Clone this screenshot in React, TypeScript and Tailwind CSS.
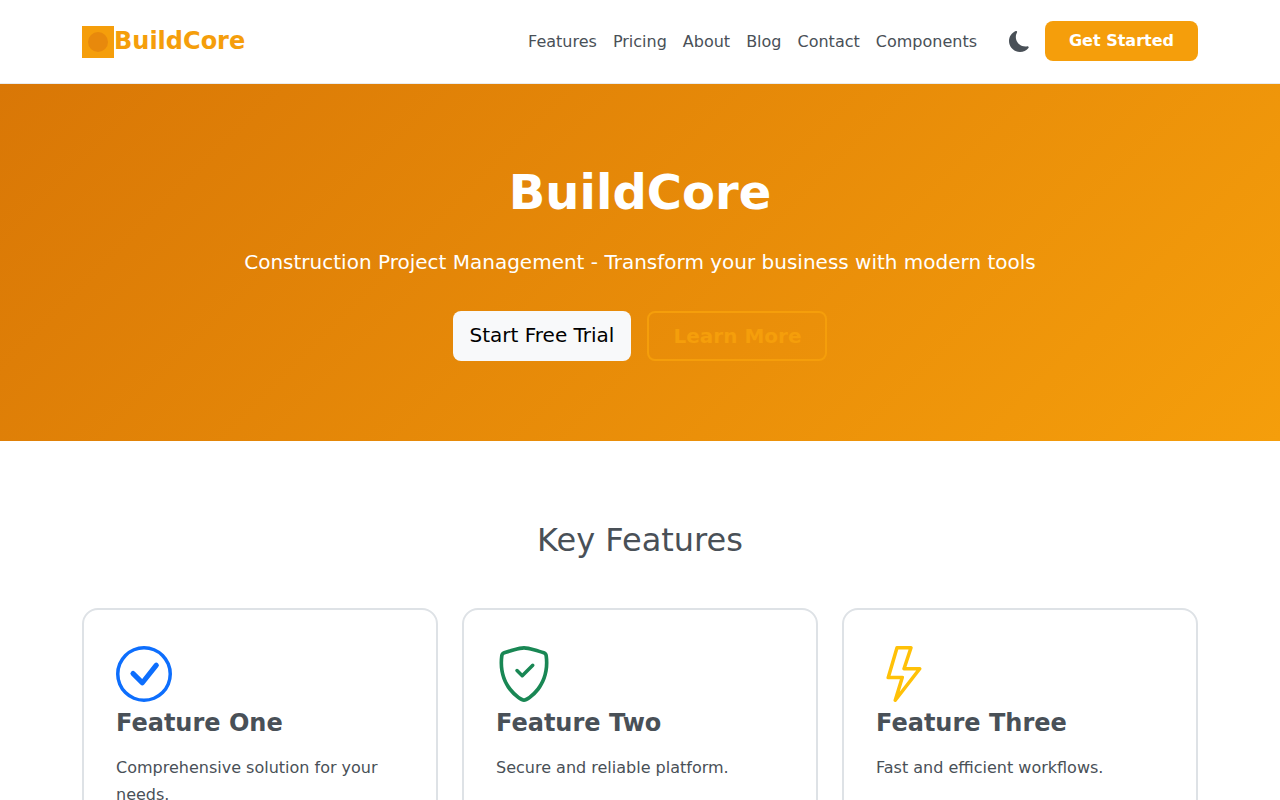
import { BsCheckCircle, BsLightning, BsMoonFill, BsShieldCheck } from "react-icons/bs";

const links = ["Features", "Pricing", "About", "Blog", "Contact", "Components"];

const features = [
  { title: "Feature One", text: "Comprehensive solution for your needs.", icon: <BsCheckCircle size={56} color="#0d6efd" /> },
  { title: "Feature Two", text: "Secure and reliable platform.", icon: <BsShieldCheck size={56} color="#198754" /> },
  { title: "Feature Three", text: "Fast and efficient workflows.", icon: <BsLightning size={56} color="#ffc107" /> },
];

export default function App() {
  return (
    <div className="bg-white text-[#495057] font-['DejaVu_Sans',sans-serif]">
      <nav className="h-[84px] border-b border-[#e9ecef] bg-white">
        <div className="w-[1116px] h-[82px] mx-auto flex items-center justify-between">
          <a className="flex items-center text-2xl font-bold text-[#f59e0b] leading-8">
            <span className="w-8 h-8 mt-[2px] bg-[#f59e0b] flex items-center justify-center">
              <span className="w-5 h-5 rounded-full bg-[#e8890c]" />
            </span>
            BuildCore
          </a>
          <div className="flex items-center">
            <ul className="flex items-center gap-4 text-base mt-[1px]">
              {links.map((l) => (
                <li key={l}>{l}</li>
              ))}
            </ul>
            <BsMoonFill size={21} color="#495057" className="ml-[32px] mt-[1px]" />
            <button className="ml-[15px] w-[153px] h-10 rounded-lg bg-[#f59e0b] text-white font-bold text-base">Get Started</button>
          </div>
        </div>
      </nav>

      <section className="h-[357px] bg-linear-[135deg] from-[#d97706] to-[#f59e0b] flex flex-col items-center pt-[79px] text-white">
        <h1 className="text-5xl font-bold leading-[58px]">BuildCore</h1>
        <p className="mt-[26px] text-xl leading-[30px]">Construction Project Management - Transform your business with modern tools</p>
        <div className="mt-[34px] flex gap-4">
          <button className="w-[178px] h-[50px] pb-[2px] rounded-lg bg-[#f8f9fa] text-black text-xl">Start Free Trial</button>
          <button className="w-[180px] h-[50px] pl-[1px] rounded-lg border-2 border-[#f59e0b] text-[#f59e0b] text-xl font-bold">Learn More</button>
        </div>
      </section>

      <section className="pt-[80px] pb-20">
        <h2 className="text-center text-[32px] leading-[38px]">Key Features</h2>
        <div className="w-[1116px] mx-auto mt-[49px] grid grid-cols-3 gap-6">
          {features.map((f) => (
            <div key={f.title} className="border-2 border-[#dee2e6] rounded-2xl p-8 pt-9 bg-white">
              {f.icon}
              <h3 className="mt-[5px] text-2xl font-bold leading-[33px]">{f.title}</h3>
              <p className="mt-[14px] text-base leading-[27px]">{f.text}</p>
            </div>
          ))}
        </div>
      </section>
    </div>
  );
}
